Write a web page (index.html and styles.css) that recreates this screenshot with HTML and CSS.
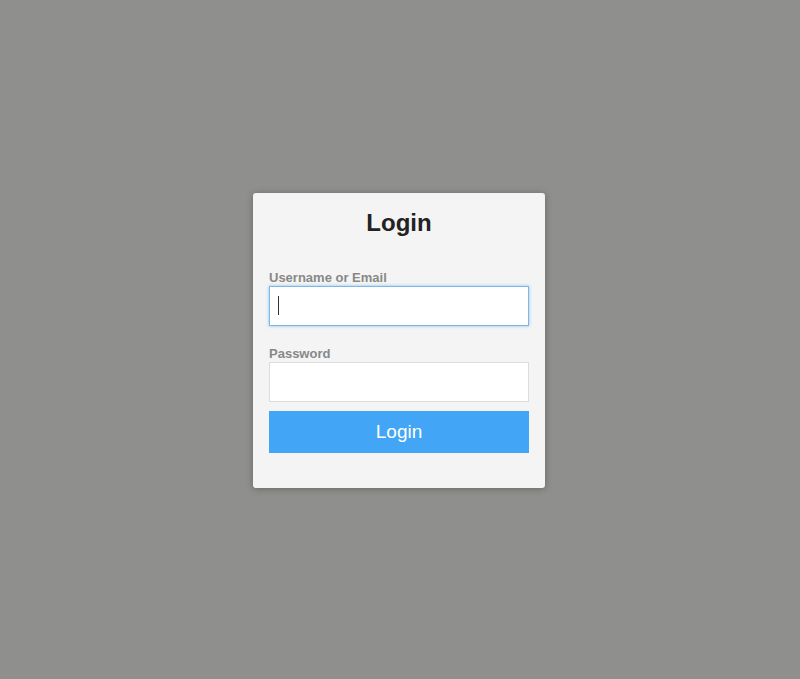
FILE: index.html
```html
<!DOCTYPE html>
<html lang="en">
<head>
<meta charset="utf-8">
<title>Login</title>
<link rel="stylesheet" href="styles.css">
</head>
<body>
<main class="page">
  <form class="card" onsubmit="return false">
    <h1 class="title">Login</h1>
    <label class="label" for="user">Username or Email</label>
    <div class="field-wrap field-wrap--first">
      <input class="field field--focused" id="user" type="text" autofocus>
      <span class="caret" aria-hidden="true"></span>
    </div>
    <label class="label" for="pass">Password</label>
    <div class="field-wrap">
      <input class="field" id="pass" type="password">
    </div>
    <button class="btn" type="submit">Login</button>
  </form>
</main>
</body>
</html>
```
FILE: styles.css
```css
html, body {
  margin: 0;
  padding: 0;
  height: 100%;
}
body {
  background: #8f8f8e;
  font-family: "Liberation Sans", Arial, sans-serif;
}
.page {
  min-height: 100vh;
  box-sizing: border-box;
  padding: 2px 2px 0 0;
  display: flex;
  align-items: center;
  justify-content: center;
}
.card {
  width: 292px;
  box-sizing: border-box;
  padding: 16px 16px 35px;
  background: #f4f4f4;
  border-radius: 3px;
  box-shadow: 0 1px 7px rgba(0, 0, 0, 0.28);
  display: flex;
  flex-direction: column;
}
.title {
  margin: 0 0 33px;
  font-size: 24px;
  line-height: 28px;
  font-weight: bold;
  color: #222;
  text-align: center;
}
.label {
  display: block;
  font-size: 13px;
  line-height: 15px;
  font-weight: bold;
  color: #888;
  margin-bottom: 1px;
}
.field-wrap {
  position: relative;
  margin: 0 0 9px;
}
.field-wrap--first {
  margin-bottom: 20px;
}
.field {
  display: block;
  width: 100%;
  height: 40px;
  box-sizing: border-box;
  margin: 0;
  padding: 0 8px;
  border: 1px solid #dcdcdc;
  background: #fff;
  font-size: 16px;
  font-family: inherit;
  color: #333;
  outline: none;
  border-radius: 0;
  caret-color: transparent;
}
.field--focused,
.field:focus {
  border: 1px solid #7eb6e6;
  box-shadow: 0 0 3px rgba(102, 170, 230, 0.7);
}
.caret {
  position: absolute;
  left: 9px;
  top: 10px;
  width: 1px;
  height: 19px;
  background: #333;
}
.btn {
  display: block;
  width: 100%;
  height: 42px;
  border: none;
  border-radius: 0;
  background: #42a5f5;
  color: #fff;
  font-family: inherit;
  font-size: 19px;
  cursor: pointer;
  padding: 0;
}
```
